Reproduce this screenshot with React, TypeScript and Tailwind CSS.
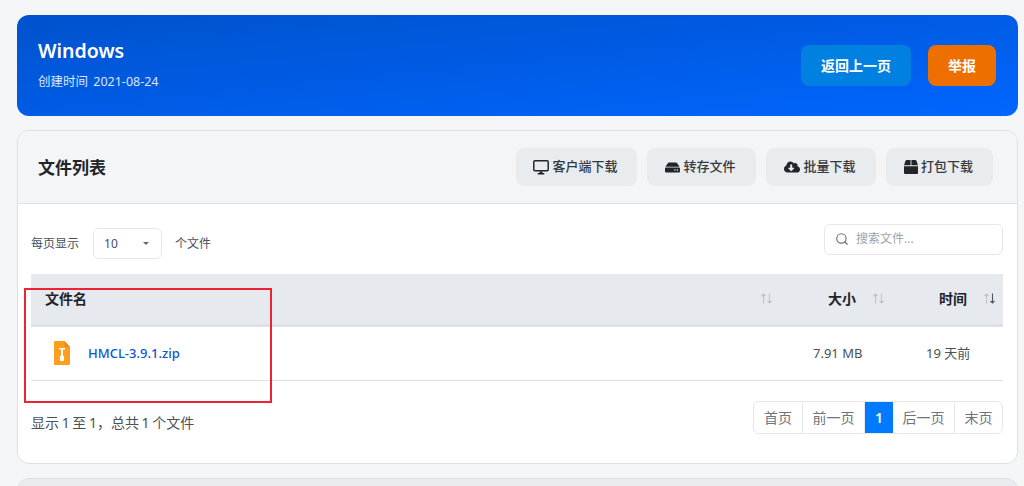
import { FaHdd, FaCloudDownloadAlt, FaBox } from "react-icons/fa";
import { Search } from "lucide-react";

const font = "[font-family:'Noto_Sans','Noto_Sans_CJK_SC',sans-serif]";

function Sort({ dark }: { dark?: boolean }) {
  return (
    <svg width="13" height="11" viewBox="0 0 13 11" fill="none" strokeWidth="1.1">
      <path d="M3.5 10.5V1M1.5 3L3.5 1L5.5 3" stroke="#bcc2c9" />
      <path d="M9.5 .5V10M7.5 8L9.5 10L11.5 8" stroke={dark ? "#4b5563" : "#bcc2c9"} />
    </svg>
  );
}

function MonitorIcon() {
  return (
    <svg width="16" height="15" viewBox="0 0 16 15" fill="none">
      <rect x="0.8" y="0.8" width="14.4" height="10" rx="1" stroke="#212529" strokeWidth="1.5" />
      <path d="M6.5 11.5h3v1.6h1.8V14.5H4.7v-1.4h1.8z" fill="#212529" />
    </svg>
  );
}

function ZipIcon() {
  return (
    <svg width="16" height="24" viewBox="0 0 16 24">
      <path d="M1 0H10.5L16 6V23a1 1 0 0 1-1 1H1a1 1 0 0 1-1-1V1a1 1 0 0 1 1-1z" fill="#fd9f1c" />
      <path d="M10.5 0L16 6H11.5a1 1 0 0 1-1-1z" fill="#e58a12" />
      <path d="M5 7h6v1.600H9v6c.9.3 1.100.9 1.100 1.500V19a1 1 0 0 1-1 1H6.900a1 1 0 0 1-1-1v-2.900c0-.6.2-1.200 1.100-1.500v-6H5z" fill="#fff" />
    </svg>
  );
}

function ToolButton({ icon, label, w }: { icon: React.ReactNode; label: string; w: string }) {
  return (
    <button className={`h-[38px] ${w} flex items-center justify-center gap-[3px] rounded-lg bg-[#e9ecef] pr-[2px] text-[13px] font-medium text-[#343a40]`}>
      {icon}
      {label}
    </button>
  );
}

function PageBtn({ label, w, active, last }: { label: string; w: string; active?: boolean; last?: boolean }) {
  return (
    <span
      className={`${w} flex items-center justify-center text-[14px] ${
        active ? "bg-[#007bff] font-semibold text-white" : "text-[#6c757d]"
      } ${last || active ? "" : "border-r border-[#e5e7eb]"}`}
    >
      {label}
    </span>
  );
}

export default function App() {
  return (
    <div className={`relative h-[486px] w-[1024px] overflow-hidden bg-[#f4f5f7] pl-[17px] pr-[6px] pt-[15px] ${font}`}>
      <div className="flex h-[101px] items-center justify-between rounded-xl bg-gradient-to-br from-[#0052cc] to-[#0066ff] pl-[21px] pr-[22px]">
        <div className="flex flex-col pb-[5px]">
          <h1 className="text-[19.5px] leading-[30px] font-semibold text-white">Windows</h1>
          <p className="mt-[7px] text-[12.5px] leading-[18px] text-[#dbe7fb] [word-spacing:2px]">创建时间 2021-08-24</p>
        </div>
        <div className="flex gap-[17px] pb-[1px]">
          <button className="h-[41px] w-[110px] rounded-lg bg-[#0080e0] text-[14px] font-semibold text-white">返回上一页</button>
          <button className="h-[41px] w-[68px] rounded-lg bg-[#ec6f00] text-[14px] font-semibold text-white">举报</button>
        </div>
      </div>

      <div className="mt-[14px] h-[334px] overflow-hidden rounded-xl border border-[#dcdfe3] bg-white">
        <div className="flex h-[73px] items-center justify-between border-b border-[#dee2e6] bg-[#f4f5f7] pl-[20px] pr-[24px]">
          <h2 className="pt-[1px] text-[17px] font-semibold text-[#212529]">文件列表</h2>
          <div className="flex gap-[10px]">
            <ToolButton w="w-[121px]" label="客户端下载" icon={<MonitorIcon />} />
            <ToolButton w="w-[109px]" label="转存文件" icon={<FaHdd className="text-[15px] text-[#212529]" />} />
            <ToolButton w="w-[110px]" label="批量下载" icon={<FaCloudDownloadAlt className="text-[16px] text-[#212529]" />} />
            <ToolButton w="w-[107px]" label="打包下载" icon={<FaBox className="text-[14px] text-[#212529]" />} />
          </div>
        </div>

        <div className="pl-[13px] pr-[14px]">
          <div className="flex h-[70px] items-center justify-between pt-[9px]">
            <div className="flex items-center text-[12px] text-[#495057]">
              <span>每页显示</span>
              <span className="ml-[14px] flex h-[31px] w-[69px] items-center justify-between rounded-md border border-[#e5e7eb] pl-[10px] pr-[12px] text-[#495057]">
                10
                <svg width="6" height="3" viewBox="0 0 6 3"><path d="M0 0h6L3 3z" fill="#5f6872" /></svg>
              </span>
              <span className="ml-[13px]">个文件</span>
            </div>
            <div className="mb-[9px] flex h-[31px] w-[179px] items-center gap-[7px] rounded-md border border-[#e5e7eb] pl-[10px] text-[12px] text-[#9ca3af]">
              <Search size={14} className="text-[#6b7280]" />
              搜索文件...
            </div>
          </div>

          <table className="w-full table-fixed border-collapse">
            <thead>
              <tr className="h-[51px] border-b-[3px] border-[#dee2e6] bg-[#e6e9ed] text-[14px] font-semibold text-[#212529]">
                <th className="pl-[14px] pr-[7px] text-left">
                  <div className="flex items-center justify-between">文件名<Sort /></div>
                </th>
                <th className="w-[112px] pr-[7px] pl-[48px]">
                  <div className="flex items-center justify-between">大小<Sort /></div>
                </th>
                <th className="w-[111px] pl-[47px] pr-[7px]">
                  <div className="flex items-center justify-between">时间<Sort dark /></div>
                </th>
              </tr>
            </thead>
            <tbody>
              <tr className="h-[55px] border-b border-[#dee2e6] text-[13px] text-[#495057]">
                <td className="pl-[23px]">
                  <div className="flex items-center gap-[18px]">
                    <ZipIcon />
                    <a className="pt-[2px] text-[13px] font-medium text-[#0a58ca]">HMCL-3.9.1.zip</a>
                  </div>
                </td>
                <td className="pl-[33px] pt-[2px]">7.91 MB</td>
                <td className="pl-[34px] pt-[2px]">19 天前</td>
              </tr>
            </tbody>
          </table>

          <div className="mt-[20px] flex items-start justify-between">
            <span className="pt-[12px] text-[14px] leading-[20px] text-[#495057] [word-spacing:-1px]">显示 1 至 1，总共 1 个文件</span>
            <div className="flex h-[33px] overflow-hidden rounded-md border border-[#e5e7eb]">
              <PageBtn w="w-[49px]" label="首页" />
              <PageBtn w="w-[62px]" label="前一页" />
              <PageBtn w="w-[28px]" label="1" active />
              <PageBtn w="w-[62px]" label="后一页" />
              <PageBtn w="w-[47px]" label="末页" last />
            </div>
          </div>
        </div>
      </div>

      <div className="mt-[14px] h-[40px] rounded-xl border border-[#dcdfe3] bg-[#e9ecef]" />

      <div className="absolute left-[24px] top-[288px] h-[115px] w-[248px] border-2 border-[#ee2233]" />
    </div>
  );
}
